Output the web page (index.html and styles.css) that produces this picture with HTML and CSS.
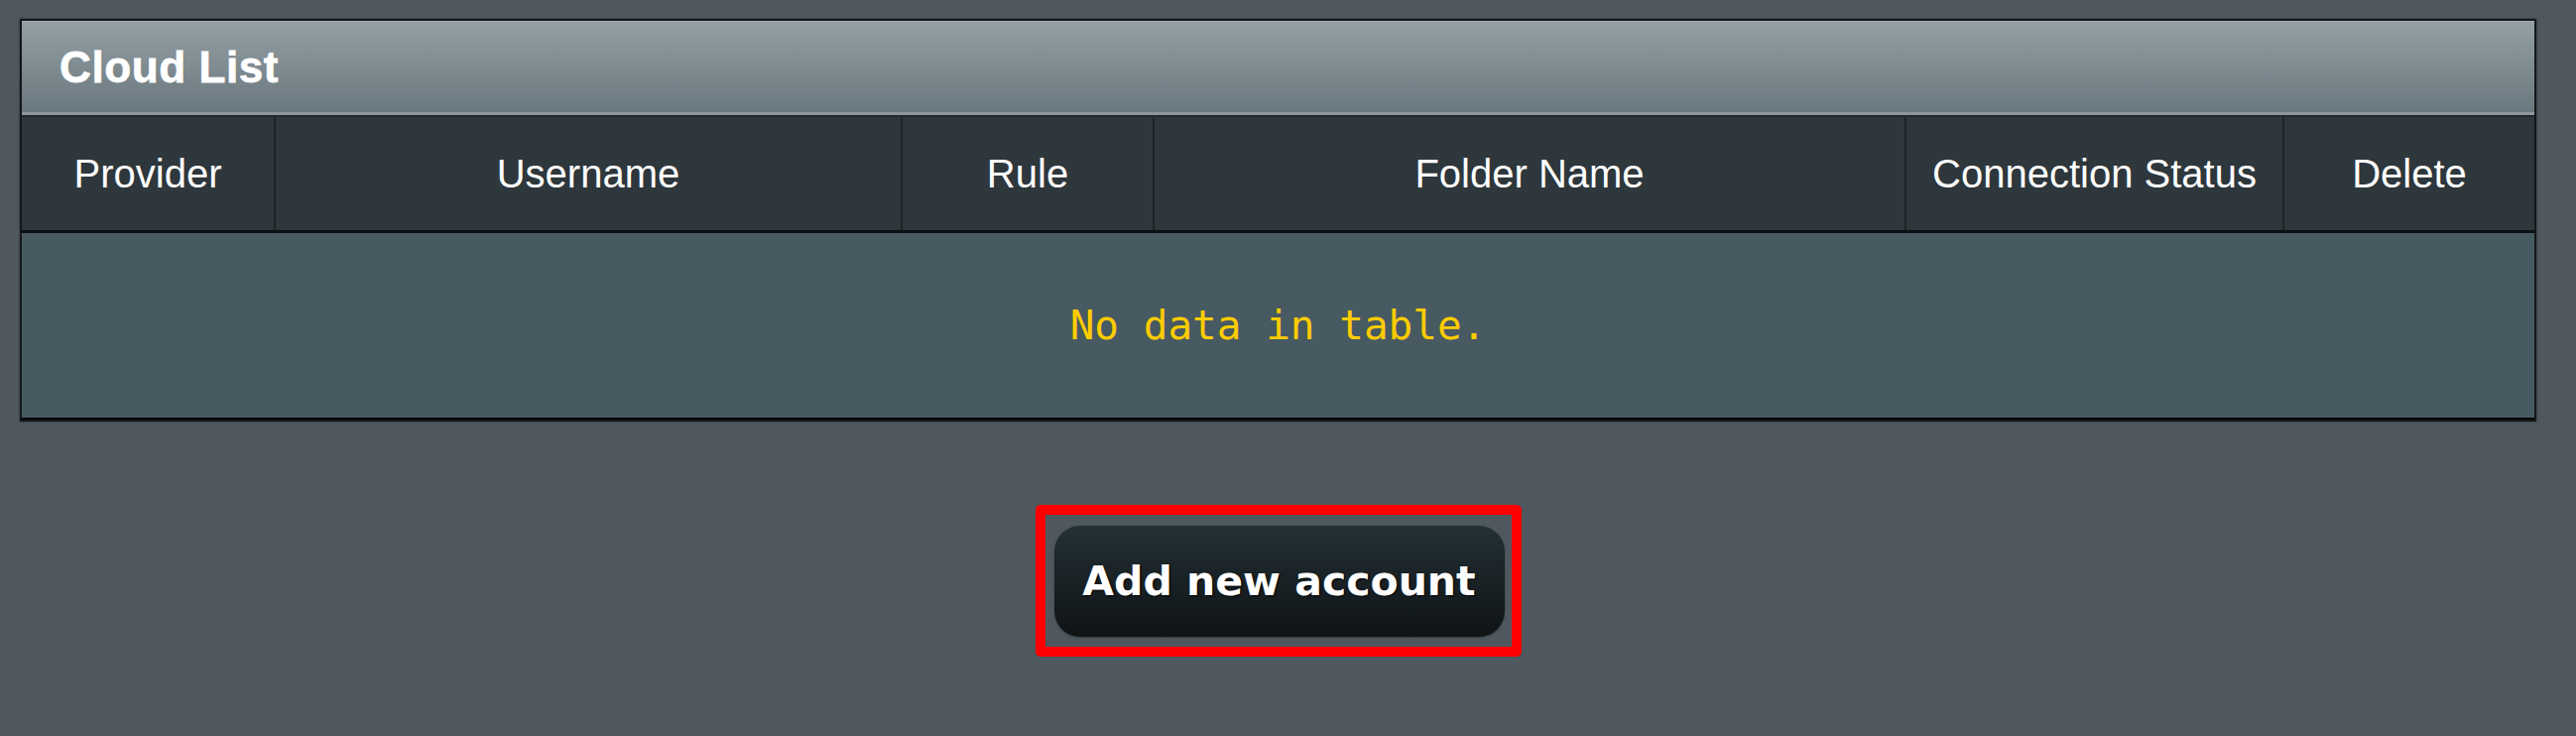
FILE: index.html
```html
<!DOCTYPE html>
<html lang="en">
<head>
<meta charset="utf-8">
<title>Cloud List</title>
<link rel="stylesheet" href="styles.css">
</head>
<body>
<div class="page">
  <div class="panel">
    <div class="panel-title">Cloud List</div>
    <div class="head-row">
      <div class="hcell c-provider">Provider</div>
      <div class="hcell c-user">Username</div>
      <div class="hcell c-rule">Rule</div>
      <div class="hcell c-folder">Folder Name</div>
      <div class="hcell c-status">Connection Status</div>
      <div class="hcell c-delete">Delete</div>
    </div>
    <div class="empty-row">No data in table.</div>
  </div>
  <div class="actions">
    <div class="highlight">
      <button class="btn">Add new account</button>
    </div>
  </div>
</div>
</body>
</html>
```

FILE: styles.css
```css
html, body {
  margin: 0;
  padding: 0;
  background: #4e585e;
}
body {
  width: 2597px;
  height: 742px;
  overflow: hidden;
  font-family: "Liberation Sans", Arial, sans-serif;
}
.page {
  display: flex;
  flex-direction: column;
  padding: 19px 0 0 20px;
  width: 2537px;
}
.panel {
  border: 2px solid #14181a;
  background: #475a61;
  box-shadow: 0 0 2px rgba(0,0,0,0.5);
}
.panel-title {
  height: 91px;
  display: flex;
  align-items: center;
  padding-left: 38px;
  font-weight: bold;
  font-size: 44px;
  letter-spacing: 0.6px;
  color: #ffffff;
  -webkit-text-stroke: 0.8px #ffffff;
  background: linear-gradient(#939fa4, #6a787f);
  border-top: 1px solid #a5b0b4;
  border-bottom: 3px solid #8d999e;
  text-shadow: 0 0 1px rgba(0,0,0,0.3);
}
.head-row {
  display: flex;
  height: 114px;
  background: #2e373c;
  border-top: 2px solid #23292c;
  border-bottom: 3px solid #0d1011;
}
.hcell {
  display: flex;
  align-items: center;
  justify-content: center;
  color: #ffffff;
  font-size: 40px;
  border-right: 2px solid #1f2427;
  box-sizing: border-box;
}
.hcell:last-child { border-right: none; }
.c-provider { width: 256px; }
.c-user { width: 632px; }
.c-rule { width: 254px; }
.c-folder { width: 758px; }
.c-status { width: 381px; }
.c-delete { flex: 1; }
.empty-row {
  height: 186px;
  display: flex;
  align-items: center;
  justify-content: center;
  color: #ffcc00;
  font-family: "DejaVu Sans Mono", "Liberation Mono", monospace;
  font-size: 41px;
  border-bottom: 2px solid #000;
}
.actions {
  display: flex;
  justify-content: center;
  padding-top: 84px;
}
.highlight {
  border: 10px solid #ff0000;
  border-radius: 5px;
  padding: 11px 7px 10px 9px;
  display: flex;
}
.btn {
  width: 454px;
  height: 112px;
  border: none;
  border-radius: 26px;
  background: linear-gradient(#233035, #0f1315);
  color: #ffffff;
  font-family: "DejaVu Sans", Verdana, sans-serif;
  font-weight: bold;
  font-size: 41px;
  text-shadow: 1px 1px 2px #000;
  padding: 0;
  box-shadow: 0 1px 2px rgba(0,0,0,0.35);
}
```
